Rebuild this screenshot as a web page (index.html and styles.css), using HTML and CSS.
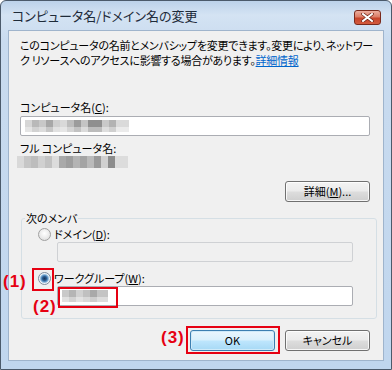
FILE: index.html
```html
<!DOCTYPE html>
<html lang="ja">
<head>
<meta charset="utf-8">
<title>コンピュータ名/ドメイン名の変更</title>
<link rel="stylesheet" href="styles.css">
</head>
<body>
<div class="window">
  <div class="titlebar">
    <span class="title">コンピュータ名/ドメイン名の変更</span>
    <span class="close"><svg width="13" height="9" viewBox="0 0 13 9"><path d="M2 1 L11 8 M11 1 L2 8" stroke="#6b2416" stroke-width="3.4" stroke-linecap="square"/><path d="M2 1 L11 8 M11 1 L2 8" stroke="#ffffff" stroke-width="2" stroke-linecap="square"/></svg></span>
  </div>
  <div class="client">
    <p class="intro">このコンピュータの名前とメンバシップを変更できます。変更により、ネットワー<br>ク リソースへのアクセスに影響する場合があります。<a class="link" href="#">詳細情報</a></p>
    <div class="label lbl-name">コンピュータ名(<u>C</u>):</div>
    <div class="textbox"><span class="mosaic mosaic-name"></span></div>
    <div class="label lbl-full">フル コンピュータ名:</div>
    <div class="mosaic mosaic-full"></div>
    <div class="btn-row btn-row-details"><span class="btn">詳細(<u>M</u>)...</span></div>
    <fieldset class="group">
      <legend class="legend">次のメンバ</legend>
      <div class="radio-row row-domain"><span class="radio"></span><span class="label">ドメイン(<u>D</u>):</span></div>
      <div class="textbox disabled"></div>
      <div class="radio-row row-wg"><span class="radio checked"></span><span class="label">ワークグループ(<u>W</u>):</span></div>
      <div class="textbox"><span class="mosaic mosaic-wg"></span></div>
    </fieldset>
    <div class="btn-row btn-row-main">
      <span class="btn default">OK</span>
      <span class="btn">キャンセル</span>
    </div>
  </div>
  <span class="mark mark-1">(1)</span>
  <span class="box box-1"></span>
  <span class="mark mark-2">(2)</span>
  <span class="box box-2"></span>
  <span class="mark mark-3">(3)</span>
  <span class="box box-3"></span>
</div>
</body>
</html>
```
FILE: styles.css
```css
html, body {
  margin: 0;
  padding: 0;
  background: #ffffff;
}

.window {
  position: relative;
  width: 392px;
  height: 370px;
  box-sizing: border-box;
  border: 1px solid #4b5a6b;
  border-radius: 6px 6px 0 0;
  background: linear-gradient(180deg, #bcd2ea 0px, #d4e3f3 14px, #c9dbef 40px, #c0d6ee 100%);
  padding: 0 7px 8px 7px;
  display: flex;
  flex-direction: column;
  overflow: hidden;
  font-family: "Noto Sans CJK JP", "Noto Sans", sans-serif;
  font-feature-settings: "palt";
  color: #000;
}

.titlebar {
  height: 29px;
  flex: none;
  display: flex;
  align-items: flex-start;
  justify-content: space-between;
}

.title {
  margin: 6px 0 0 4px;
  font-size: 13px;
  line-height: 18px;
  color: #1e2b3a;
}

.close {
  margin: 9px 3px 0 0;
  width: 25px;
  height: 13px;
  border: 1px solid #7a2a1c;
  border-radius: 3px;
  background: linear-gradient(180deg, #ecae9f 0%, #dc7d66 45%, #c7442a 55%, #d25b3f 100%);
  display: flex;
  align-items: center;
  justify-content: center;
}

.client {
  flex: 1;
  box-sizing: border-box;
  background: #f0f0f0;
  border: 1px solid #9fb4cc;
  padding: 0 13px 0 11px;
  display: flex;
  flex-direction: column;
}

.intro {
  margin: 7px 0 0 0;
  font-size: 11px;
  line-height: 15px;
  letter-spacing: -0.25px;
  white-space: nowrap;
}

.link {
  color: #0066cc;
  text-decoration: underline;
}

.label {
  font-size: 11px;
  line-height: 15px;
}

.label u, .btn u {
  text-decoration: underline;
}

.lbl-name {
  margin-top: 32px;
}

.textbox {
  box-sizing: border-box;
  height: 20px;
  margin-top: 1px;
  background: #ffffff;
  border: 1px solid #abadb3;
  border-radius: 2px;
  display: flex;
  align-items: center;
  padding-left: 4px;
}

.textbox.disabled {
  background: #f0f0f0;
  border-color: #cfd1d4;
}

.lbl-full {
  margin-top: 5px;
}

.mosaic {
  display: block;
  height: 12px;
  background-repeat: no-repeat;
}

.mosaic-name {
  width: 104px;
  background-image:
    linear-gradient(90deg, #d6d6d6 0 7px, #b9b9b9 7px 14px, #c8c8c8 14px 21px, #a7a7a7 21px 28px, #cfcfcf 28px 35px, #d9d9d9 35px 42px, #bdbdbd 42px 49px, #9c9c9c 49px 56px, #c4c4c4 56px 63px, #8f8f8f 63px 77px, #c9c9c9 77px 84px, #b3b3b3 84px 91px, #dadada 91px 104px),
    linear-gradient(90deg, #e4e4e4 0 7px, #d2d2d2 7px 14px, #dcdcdc 14px 21px, #c6c6c6 21px 28px, #e1e1e1 28px 35px, #e6e6e6 35px 42px, #d4d4d4 42px 49px, #c2c2c2 49px 56px, #dbdbdb 56px 63px, #bcbcbc 63px 77px, #dedede 77px 84px, #d0d0d0 84px 91px, #ebebeb 91px 104px);
  background-size: 104px 7px, 104px 5px;
  background-position: 0 0, 0 7px;
}

.mosaic-full {
  margin-left: -3px;
  width: 111px;
  background-image:
    linear-gradient(90deg, #d9d9d9 0 7px, #c6c6c6 7px 14px, #bdbdbd 14px 21px, #d0d0d0 21px 28px, #c2c2c2 28px 35px, #dcdcdc 35px 42px, #a9a9a9 42px 49px, #9e9e9e 49px 56px, #b4b4b4 56px 63px, #a4a4a4 63px 70px, #bababa 70px 77px, #9a9a9a 77px 84px, #d0d0d0 84px 91px, #8c8c8c 91px 98px, #dcdcdc 98px 111px);
  background-size: 111px 12px;
}

.mosaic-wg {
  width: 46px;
  background-image:
    linear-gradient(90deg, #c9c9c9 0 7px, #b5b5b5 7px 14px, #d1d1d1 14px 21px, #c0c0c0 21px 28px, #a9a9a9 28px 35px, #c4c4c4 35px 46px),
    linear-gradient(90deg, #e0e0e0 0 7px, #d2d2d2 7px 14px, #e2e2e2 14px 21px, #d8d8d8 21px 28px, #cdcdcd 28px 35px, #dcdcdc 35px 46px);
  background-size: 46px 7px, 46px 5px;
  background-position: 0 0, 0 7px;
}

.btn-row {
  display: flex;
  justify-content: flex-end;
  gap: 10px;
}

.btn-row-details {
  margin-top: 13px;
}

.btn-row-main {
  margin-top: 11px;
}

.btn {
  box-sizing: border-box;
  width: 85px;
  height: 21px;
  border: 1px solid #707070;
  border-radius: 3px;
  background: linear-gradient(180deg, #f3f3f3 0%, #ebebeb 48%, #dddddd 52%, #cfcfcf 100%);
  box-shadow: inset 0 0 0 1px rgba(255, 255, 255, 0.8);
  display: flex;
  align-items: center;
  justify-content: center;
  font-size: 11px;
  line-height: 15px;
}

.btn.default {
  border-color: #3c7fb1;
  background: linear-gradient(180deg, #eaf6fd 0%, #d9f0fc 48%, #bee6fd 52%, #a7d9f5 100%);
  box-shadow: inset 0 0 0 1px #cfeaf9;
}

.group {
  margin: 9px -7px 0 1px;
  padding: 0 0 12px 3px;
  border: 1px solid #d5dfe5;
  border-radius: 3px;
  min-width: 0;
}

.legend {
  padding: 0 1px;
  font-size: 11px;
  line-height: 14px;
}

.radio-row {
  display: flex;
  align-items: center;
  margin-left: 13px;
  height: 15px;
}

.row-domain {
  margin-top: 2px;
}

.row-wg {
  margin-top: 9px;
}

.radio {
  box-sizing: border-box;
  width: 13px;
  height: 13px;
  border-radius: 50%;
  border: 1px solid #a0a0a0;
  background: radial-gradient(circle at 50% 40%, #ffffff 0, #f0f0f0 40%, #d8d8d8 100%);
  margin-right: 3px;
  flex: none;
}

.radio.checked {
  border-color: #7d8d9e;
  background: radial-gradient(circle at 50% 50%, #16335a 0, #2a5a8d 2px, #6aa0cf 3.5px, #c2daec 4.5px, #eef3f8 5px);
}

.group .textbox {
  margin: 0 23px 0 32px;
}

.mark {
  position: absolute;
  font-family: "Liberation Sans", sans-serif;
  font-weight: bold;
  font-size: 17px;
  line-height: 18px;
  color: #e60012;
  letter-spacing: 1px;
}

.box {
  position: absolute;
  box-sizing: border-box;
  border: 2px solid #e60012;
}

.mark-1 { left: 2px; top: 272px; }
.box-1 { left: 31px; top: 267px; width: 22px; height: 23px; }
.mark-2 { left: 32px; top: 297px; }
.box-2 { left: 57px; top: 286px; width: 60px; height: 21px; }
.mark-3 { left: 160px; top: 328px; }
.box-3 { left: 185px; top: 325px; width: 94px; height: 28px; }
```
